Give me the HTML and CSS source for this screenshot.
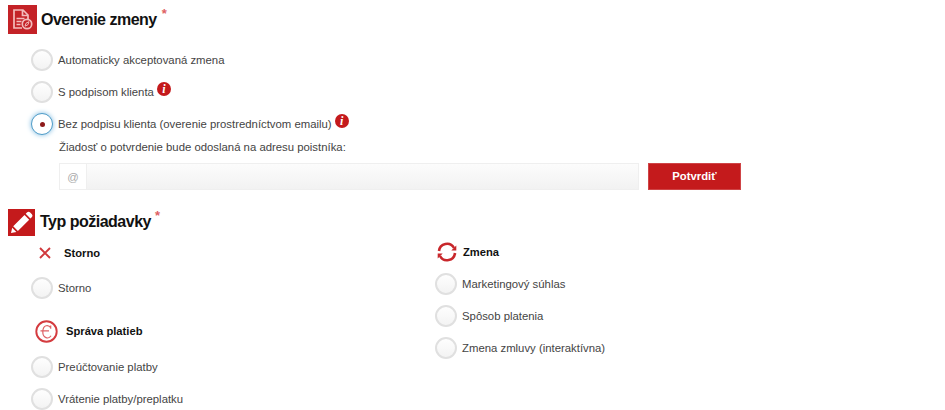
FILE: index.html
```html
<!DOCTYPE html>
<html lang="sk">
<head>
    <meta charset="UTF-8">
    <meta name="viewport" content="width=device-width, initial-scale=1.0">
    <title>Overenie zmeny</title>
    <link rel="stylesheet" href="styles.css">
</head>
<body>
    <form class="form">
        <section class="verification">
            <div class="section-header">
                <svg class="section-icon" viewBox="0 0 29 29">
                    <rect width="29" height="29" fill="#c42227"/>
                    <g fill="none" stroke="#f3bcbc" stroke-width="1.7">
                        <path d="M14 23H6V5h9l5 5v4M14.5 5v5.500H20"/>
                        <path d="M8.500 13.500h8M8.500 16.500h5M8.500 19.500h4"/>
                        <circle cx="19" cy="19" r="4.700"/>
                        <path d="M17 21.200l1-3 3-1.500-1 3z" stroke-width="1"/>
                    </g>
                </svg>
                <h2>Overenie zmeny</h2>
                <span class="required">*</span>
            </div>
            <div class="options">
                <label class="option"><span class="radio"></span><span class="text">Automaticky akceptovaná zmena</span></label>
                <label class="option"><span class="radio"></span><span class="text">S podpisom klienta</span><span class="info">i</span></label>
                <label class="option"><span class="radio checked"></span><span class="text">Bez podpisu klienta (overenie prostredníctvom emailu)</span><span class="info">i</span></label>
            </div>
            <p class="note">Žiadosť o potvrdenie bude odoslaná na adresu poistníka:</p>
            <div class="email-row">
                <div class="email-group">
                    <span class="addon">@</span>
                    <span class="email-input"></span>
                </div>
                <button type="button" class="confirm">Potvrdiť</button>
            </div>
        </section>

        <section class="request">
            <div class="section-header">
                <svg class="section-icon small" viewBox="0 0 27 27">
                    <rect width="27" height="27" fill="#c41a1c"/>
                    <path d="M3 24l1.200-5.300 4.200 4.200zM5.200 17.200L16.500 6l4.700 4.700L9.900 21.900zM17.700 4.800l1.500-1.500q1.500-1.100 3 .2l1.700 1.700q1.200 1.400.1 2.800l-1.600 1.500z" fill="#fff"/>
                </svg>
                <h2>Typ požiadavky</h2>
                <span class="required">*</span>
            </div>
            <div class="columns">
                <div class="column">
                    <h3 class="group-title cancel">
                        <svg width="12" height="12" viewBox="0 0 12 12"><path d="M1 1l10 10M11 1L1 11" stroke="#d0383c" stroke-width="1.900"/></svg>
                        Storno
                    </h3>
                    <label class="option"><span class="radio"></span><span class="text">Storno</span></label>
                    <h3 class="group-title payments">
                        <svg width="23" height="23" viewBox="0 0 23 23" fill="none" stroke="#d43b3f">
                            <circle cx="11.500" cy="11.500" r="10.200" stroke-width="1.900"/>
                            <path d="M15.700 5.500v3.200M15.700 7.800C13.800 4.300 8 4.500 7.800 11.500s6 8 8.200 4.300M5.500 10.800h8.500" stroke-width="1.200" opacity=".8"/>
                        </svg>
                        Správa platieb
                    </h3>
                    <label class="option"><span class="radio"></span><span class="text">Preúčtovanie platby</span></label>
                    <label class="option"><span class="radio"></span><span class="text">Vrátenie platby/preplatku</span></label>
                </div>
                <div class="column">
                    <h3 class="group-title change">
                        <svg width="20" height="20" viewBox="0 0 20 20">
                            <path d="M2 9A8 8 0 0 1 17 6M18 11A8 8 0 0 1 3 14" fill="none" stroke="#c8272b" stroke-width="2.600"/>
                            <path d="M19.300 3.500v5h-5zM.7 16.500v-5h5z" fill="#c8272b"/>
                        </svg>
                        Zmena
                    </h3>
                    <label class="option"><span class="radio"></span><span class="text">Marketingový súhlas</span></label>
                    <label class="option"><span class="radio"></span><span class="text">Spôsob platenia</span></label>
                    <label class="option"><span class="radio"></span><span class="text">Zmena zmluvy (interaktívna)</span></label>
                </div>
            </div>
        </section>
    </form>
</body>
</html>
```
FILE: styles.css
```css
* {
    box-sizing: border-box;
}
body {
    margin: 0;
    height: 100vh;
    overflow: hidden;
    background-color: #fff;
    color: #444;
    font-family: "Liberation Sans", Arial, sans-serif;
    font-size: 11.35px;
}
.form {
    padding: 5px 8px 0;
}
.section-header {
    display: flex;
    align-items: center;
    height: 29px;
}
.section-icon {
    width: 29px;
    height: 29px;
    margin-right: 4px;
}
.section-icon.small {
    width: 27px;
    height: 27px;
    margin-right: 5px;
}
h2 {
    margin: 0;
    color: #111;
    font-size: 16px;
    line-height: 20px;
    letter-spacing: -0.5px;
}
.required {
    align-self: flex-start;
    margin-left: 5px;
    color: #de6163;
    font-size: 13px;
    font-weight: bold;
    line-height: 17px;
}
.request h2 {
    margin-bottom: 1px;
}
.request .required {
    margin-left: 4px;
    line-height: 15px;
}
.options {
    padding-top: 10px;
}
.option {
    display: flex;
    align-items: center;
    height: 32px;
    padding-left: 23px;
}
.radio {
    display: flex;
    align-items: center;
    justify-content: center;
    flex: none;
    width: 22px;
    height: 22px;
    margin-right: 5px;
    border: 2px solid #e0e0e0;
    border-radius: 50%;
    background: linear-gradient(#fefefe, #f3f3f3);
}
.radio.checked {
    border: 1px solid #4f9cc8;
    background: #fff;
    box-shadow: 0 0 5px #7fbbe0;
}
.radio.checked::after {
    content: "";
    width: 5px;
    height: 5px;
    border-radius: 50%;
    background-color: #8e1a1a;
}
.info {
    width: 14px;
    height: 14px;
    margin: -6px 0 0 3px;
    border-radius: 50%;
    background-color: #c41a1c;
    color: #fff;
    font: italic bold 12px/14px "Liberation Serif", serif;
    text-align: center;
}
.note {
    margin: 0 0 0 51px;
    line-height: 14px;
}
.email-row {
    display: flex;
    gap: 9px;
    margin: 9px 0 0 51px;
}
.email-group {
    display: flex;
    width: 580px;
    height: 27px;
    border: 1px solid #efefef;
}
.addon {
    width: 27px;
    border-right: 1px solid #efefef;
    color: #aaa;
    line-height: 26px;
    text-align: center;
}
.email-input {
    flex: 1;
    background: linear-gradient(#fcfcfc, #f2f2f2);
}
.confirm {
    width: 93px;
    height: 27px;
    padding: 0 0 2px;
    border: 1px solid #cf4446;
    background-color: #c41a1c;
    color: #fff;
    font: bold 11.3px "Liberation Sans", Arial, sans-serif;
}
.request {
    margin-top: 18px;
}
.columns {
    display: grid;
    grid-template-columns: 404px 1fr;
}
.group-title {
    display: flex;
    align-items: center;
    margin: 0;
    color: #111;
    font-size: 11.2px;
}
.cancel {
    height: 35px;
    padding: 0 0 3px 31px;
    gap: 13px;
}
.payments {
    height: 47px;
    padding: 7px 0 0 27px;
    gap: 8px;
}
.change {
    height: 31px;
    padding: 0 0 2px 25px;
    gap: 6px;
}
```
